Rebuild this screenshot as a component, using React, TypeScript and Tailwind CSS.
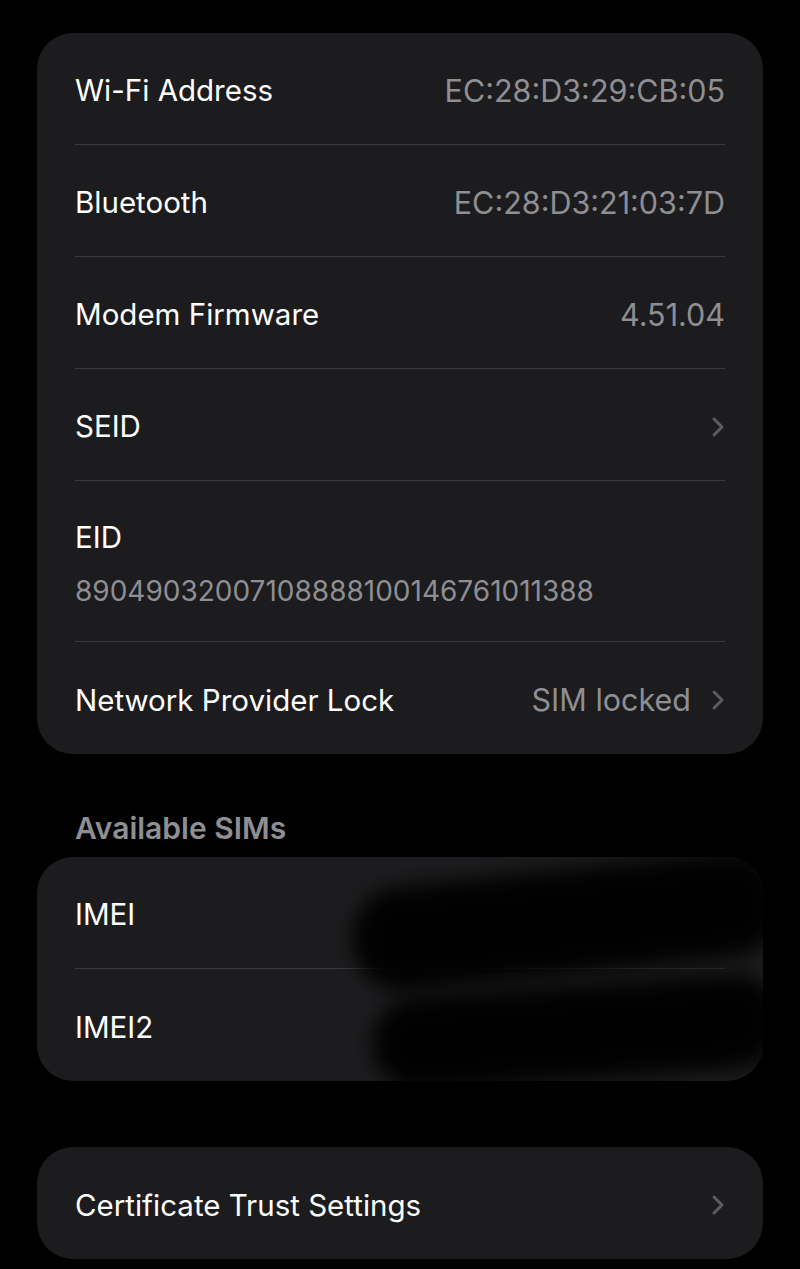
import React from "react";

const font = { fontFamily: "Inter, 'Noto Sans', sans-serif" };

function Chevron() {
  return (
    <svg width="14" height="22" viewBox="0 0 14 22" className="ml-5 shrink-0">
      <path d="M3 3 L11 11 L3 19" fill="none" stroke="#5b5b60" strokeWidth="3" strokeLinecap="round" strokeLinejoin="round" />
    </svg>
  );
}

function Row({ label, value, chevron, last }: { label: string; value?: string; chevron?: boolean; last?: boolean }) {
  return (
    <div className="px-[38px]">
      <div className={`flex h-[112px] items-center pt-1 ${last ? "" : "border-b border-[#3a3a3c]"}`}>
        <span className="text-[29.5px] text-white">{label}</span>
        <span className="ml-auto text-[30.5px] text-[#8e8e93]">{value}</span>
        {chevron && <Chevron />}
      </div>
    </div>
  );
}

function Redaction({ className }: { className: string }) {
  return <div className={`absolute rounded-[50px] bg-black/95 blur-[10px] ${className}`} />;
}

export default function App() {
  return (
    <div className="min-h-[1269px] bg-black px-[37px] pt-[33px]" style={font}>
      <div className="overflow-hidden rounded-[36px] bg-[#1c1c1e]">
        <Row label="Wi-Fi Address" value="EC:28:D3:29:CB:05" />
        <Row label="Bluetooth" value="EC:28:D3:21:03:7D" />
        <Row label="Modem Firmware" value="4.51.04" />
        <Row label="SEID" chevron />
        <div className="px-[38px]">
          <div className="flex h-[161px] flex-col justify-center border-b border-[#3a3a3c] pt-1">
            <span className="text-[29.5px] leading-[34px] text-white">EID</span>
            <span className="mt-[21px] text-[28px] leading-[32px] text-[#8e8e93]">89049032007108888100146761011388</span>
          </div>
        </div>
        <Row label="Network Provider Lock" value="SIM locked" chevron last />
      </div>

      <div className="pl-[38px] pt-[56px] pb-[11px] text-[30px] font-semibold leading-[36px] text-[#8e8e93]">Available SIMs</div>

      <div className="relative overflow-hidden rounded-[36px] bg-[#1c1c1e]">
        <Row label="IMEI" value="" />
        <Row label="IMEI2" value="" last />
        <Redaction className="left-[315px] top-[12px] h-[105px] w-[430px] -rotate-[6deg]" />
        <Redaction className="left-[335px] top-[128px] h-[95px] w-[410px] -rotate-[4deg]" />
      </div>

      <div className="mt-[66px] rounded-[36px] bg-[#1c1c1e]">
        <Row label="Certificate Trust Settings" chevron last />
      </div>
    </div>
  );
}
